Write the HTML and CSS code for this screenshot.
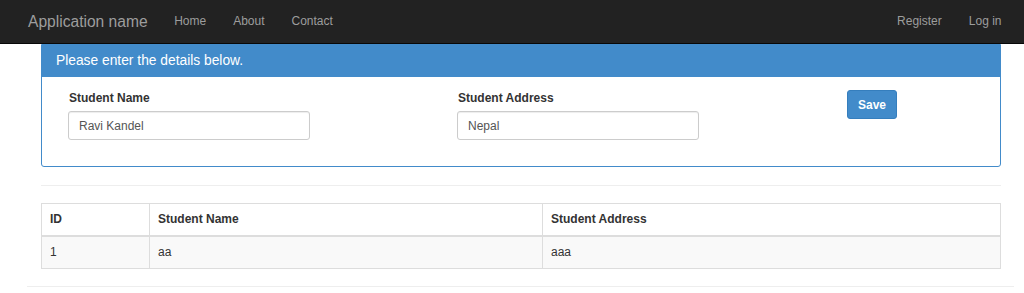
FILE: index.html
```html
<!DOCTYPE html>
<html lang="en">
  <head>
    <meta charset="UTF-8" />
    <meta name="viewport" content="width=device-width, initial-scale=1.0" />
    <title>Students</title>
    <link rel="stylesheet" href="styles.css">
  </head>
  <body>
    <header class="navbar">
      <a class="brand" href="#">Application name</a>
      <ul class="nav">
        <li><a href="#">Home</a></li>
        <li><a href="#">About</a></li>
        <li><a href="#">Contact</a></li>
      </ul>
      <ul class="nav nav_right">
        <li><a href="#">Register</a></li>
        <li><a href="#">Log in</a></li>
      </ul>
    </header>

    <main class="container">
      <div class="content">
        <section class="panel">
          <h3 class="panel_heading">Please enter the details below.</h3>
          <form class="panel_body">
            <div class="form_group">
              <label for="navn">Student Name</label>
              <input id="navn" type="text" value="Ravi Kandel" />
            </div>
            <div class="form_group">
              <label for="adresse">Student Address</label>
              <input id="adresse" type="text" value="Nepal" />
            </div>
            <div class="form_group">
              <button type="button" class="btn">Save</button>
            </div>
          </form>
        </section>

        <hr />

        <table class="students">
          <thead>
            <tr>
              <th class="col_id">ID</th>
              <th class="col_navn">Student Name</th>
              <th>Student Address</th>
            </tr>
          </thead>
          <tbody>
            <tr>
              <td>1</td>
              <td>aa</td>
              <td>aaa</td>
            </tr>
          </tbody>
        </table>
      </div>
      <hr class="footer_line" />
    </main>
  </body>
</html>
```

FILE: styles.css
```css
body {
  margin: 0;
  padding: 0;
  font-family: "Liberation Sans", Arial, sans-serif;
  font-size: 12px;
  line-height: 17px;
  color: #333;
  background-color: #fff;
}

a {
  text-decoration: none;
}

/* navbar */
.navbar {
  display: flex;
  align-items: center;
  height: 43px;
  padding: 0 9px 0 15px;
  background-color: #222;
  border-bottom: 1px solid #080808;
}

.brand {
  padding: 0 13px;
  font-size: 15.6px;
  line-height: 43px;
  color: #9d9d9d;
}

.nav {
  display: flex;
  margin: 0;
  padding: 0;
  list-style: none;
}

.nav a {
  display: block;
  padding: 0 13.5px;
  line-height: 43px;
  color: #9d9d9d;
}

.nav_right {
  margin-left: auto;
}

/* indhold */
.container {
  padding: 0 10px 0 27px;
}

.content {
  margin: 0 13px 0 14px;
}

.panel {
  margin-bottom: 18px;
  border: 1px solid #428bca;
  border-radius: 0 0 3px 3px;
}

.panel_heading {
  height: 32px;
  margin: 0 -1px;
  padding: 0 15px;
  font-size: 13.8px;
  font-weight: normal;
  line-height: 32px;
  color: #fff;
  background-color: #428bca;
}

.panel_body {
  display: grid;
  grid-template-columns: 389px 390px 1fr;
  padding: 13px;
}

.form_group {
  padding-left: 13px;
  padding-bottom: 13px;
}

label {
  display: block;
  margin-bottom: 4px;
  padding-left: 1px;
  font-weight: bold;
}

input {
  box-sizing: border-box;
  width: 242px;
  height: 29px;
  padding: 5px 10px;
  font-family: inherit;
  font-size: 12px;
  color: #555;
  border: 1px solid #ccc;
  border-radius: 3px;
  box-shadow: inset 0 1px 1px rgba(0, 0, 0, 0.075);
}

.btn {
  height: 29px;
  padding: 0 10px;
  font-family: inherit;
  font-size: 12px;
  font-weight: bold;
  color: #fff;
  background-color: #428bca;
  border: 1px solid #357ebd;
  border-radius: 3px;
  cursor: pointer;
}

hr {
  margin: 17px 0;
  border: 0;
  border-top: 1px solid #eee;
}

.footer_line {
  margin-top: 0;
}

/* tabel */
.students {
  width: 100%;
  margin-bottom: 17px;
  border-collapse: collapse;
  border: 1px solid #ddd;
}

.students th,
.students td {
  padding: 7px 8px;
  text-align: left;
  border: 1px solid #ddd;
}

.students th {
  border-bottom-width: 2px;
}

.students tbody tr {
  background-color: #f9f9f9;
}

.col_id {
  width: 91px;
}

.col_navn {
  width: 376px;
}
```
